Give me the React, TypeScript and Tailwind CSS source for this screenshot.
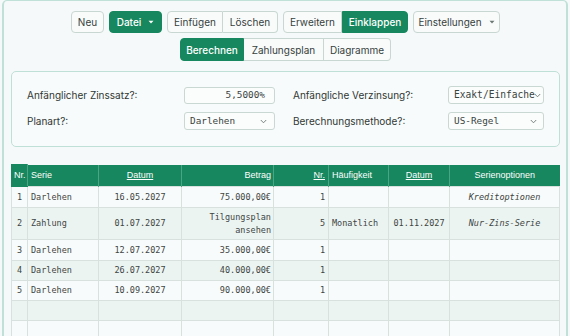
import React from "react";

const btn = "h-full flex items-center justify-center text-[10px] leading-none";
const light = "bg-[#f9fbfb] text-[#36413d] border border-[#c8d7d2]";
const green = "bg-[#16875e] text-white border border-[#16875e] font-medium";

function Caret({ color }: { color: string }) {
  return (
    <svg width="6" height="4" viewBox="0 0 6 4" className="ml-[7px]">
      <path d="M0.5 0.8 L5.5 0.8 L3 3.4 Z" fill={color} />
    </svg>
  );
}

function Chevron() {
  return (
    <svg width="7" height="5" viewBox="0 0 7 5">
      <path d="M0.8 1 L3.5 3.8 L6.2 1" fill="none" stroke="#6b7773" strokeWidth="0.9" />
    </svg>
  );
}

const mono = "font-['DejaVu_Sans_Mono',monospace]";

type Row = {
  h: string;
  bg: string;
  cells: React.ReactNode[];
};

export default function App() {
  const rows: Row[] = [
    { h: "h-[21px]", bg: "bg-[#f8fbfb]", cells: ["1", "Darlehen", "16.05.2027", "75.000,00€", "1", "", "", "Kreditoptionen"] },
    {
      h: "h-[32px]",
      bg: "bg-[#ecf4f2]",
      cells: [
        "2",
        "Zahlung",
        "01.07.2027",
        <span className="leading-[13px] block">Tilgungsplan<br />ansehen</span>,
        "5",
        "Monatlich",
        "01.11.2027",
        "Nur-Zins-Serie",
      ],
    },
    { h: "h-[21px]", bg: "bg-[#f8fbfb]", cells: ["3", "Darlehen", "12.07.2027", "35.000,00€", "1", "", "", ""] },
    { h: "h-[20px]", bg: "bg-[#ecf4f2]", cells: ["4", "Darlehen", "26.07.2027", "40.000,00€", "1", "", "", ""] },
    { h: "h-[20px]", bg: "bg-[#f8fbfb]", cells: ["5", "Darlehen", "10.09.2027", "90.000,00€", "1", "", "", ""] },
    { h: "h-[20px]", bg: "bg-[#ecf4f2]", cells: ["", "", "", "", "", "", "", ""] },
    { h: "h-[20px]", bg: "bg-[#f8fbfb]", cells: ["", "", "", "", "", "", "", ""] },
  ];
  const align = ["text-left pl-[5px]", "text-left pl-[3px]", "text-center", "text-right pr-[2px]", "text-right pr-[3px]", "text-left pl-[3px]", "text-center", "text-center italic"];

  return (
    <div className="w-[570px] h-[336px] overflow-hidden bg-[#f6f9f9] font-['Inter',sans-serif]">
      <div className="mx-[2px] h-[360px] border-x-2 border-t border-[#bfe1d7] rounded-t-[5px] pl-[7px] pr-[6px] pt-[10px]">
        {/* toolbar row 1 */}
        <div className="flex justify-center gap-[5px] h-[22px]">
          <button className={`${btn} ${light} w-[33px] rounded-[4px]`}>Neu</button>
          <button className={`${btn} ${green} w-[53px] rounded-[4px]`}>
            Datei
            <Caret color="#ffffff" />
          </button>
          <div className="flex h-full">
            <button className={`${btn} ${light} w-[56px] rounded-l-[4px]`}>Einfügen</button>
            <button className={`${btn} ${light} border-l-0 w-[55px] rounded-r-[4px]`}>Löschen</button>
          </div>
          <div className="flex h-full">
            <button className={`${btn} ${light} w-[59px] rounded-l-[4px]`}>Erweitern</button>
            <button className={`${btn} ${green} w-[66px] rounded-r-[4px]`}>Einklappen</button>
          </div>
          <button className={`${btn} ${light} w-[87px] rounded-[4px]`}>
            Einstellungen
            <Caret color="#6b7773" />
          </button>
        </div>
        {/* toolbar row 2 */}
        <div className="flex justify-center mt-[5px] h-[23px]">
          <button className={`${btn} ${green} w-[64px] rounded-l-[4px]`}>Berechnen</button>
          <button className={`${btn} ${light} border-l-0 w-[80px]`}>Zahlungsplan</button>
          <button className={`${btn} ${light} border-l-0 w-[67px] rounded-r-[4px]`}>Diagramme</button>
        </div>

        {/* form panel */}
        <div className="mt-[10px] h-[76px] border border-[#bfe0d6] rounded-[5px] bg-[#f8fbfb] pl-[15px] pr-[14px] pt-[14px]">
          <div className="grid grid-cols-[248px_251px] gap-x-[18px] gap-y-[8px] text-[10px] text-[#2f3835]">
            <div className="flex items-center justify-between h-[18px]">
              <span>Anfänglicher Zinssatz?:</span>
              <div className={`w-[91px] h-[17px] border border-[#c9d8d3] rounded-[3px] bg-[#fbfdfd] flex items-center justify-end pr-[9px] ${mono} text-[9.4px] text-[#3a4340]`}>
                5,5000%
              </div>
            </div>
            <div className="flex items-center justify-between h-[18px]">
              <span>Anfängliche Verzinsung?:</span>
              <div className={`w-[96px] h-[18px] border border-[#c9d8d3] rounded-[3px] bg-[#fbfdfd] flex items-center pl-[5px] pr-[1px] ${mono} text-[9.6px] text-[#3a4340] overflow-hidden whitespace-nowrap`}>
                <span>Exakt/Einfache</span>
                <span className="-ml-[1px]"><Chevron /></span>
              </div>
            </div>
            <div className="flex items-center justify-between h-[18px]">
              <span>Planart?:</span>
              <div className={`w-[91px] h-[18px] border border-[#c9d8d3] rounded-[3px] bg-[#fbfdfd] flex items-center justify-between pl-[5px] pr-[7px] ${mono} text-[9.4px] text-[#3a4340]`}>
                <span>Darlehen</span>
                <Chevron />
              </div>
            </div>
            <div className="flex items-center justify-between h-[18px]">
              <span>Berechnungsmethode?:</span>
              <div className={`w-[96px] h-[18px] border border-[#c9d8d3] rounded-[3px] bg-[#fbfdfd] flex items-center justify-between pl-[5px] pr-[6px] ${mono} text-[9.4px] text-[#3a4340]`}>
                <span>US-Regel</span>
                <Chevron />
              </div>
            </div>
          </div>
        </div>

        {/* table */}
        <table className="mt-[17px] ml-0 w-[548px] table-fixed border-collapse">
          <colgroup>
            <col className="w-[16px]" />
            <col className="w-[71px]" />
            <col className="w-[83px]" />
            <col className="w-[92px]" />
            <col className="w-[55px]" />
            <col className="w-[60px]" />
            <col className="w-[61px]" />
            <col className="w-[110px]" />
          </colgroup>
          <thead>
            <tr className="h-[22px] bg-[#16875e] text-white text-[9px] font-['Liberation_Sans',Arial,sans-serif]">
              <th className="font-normal text-left pl-[2px] border border-[#16875e] border-r-[#4ba584]">Nr.</th>
              <th className="font-normal text-left pl-[3px] border-r border-[#4ba584]">Serie</th>
              <th className="font-normal text-center border-r border-[#4ba584]"><span className="underline">Datum</span></th>
              <th className="font-normal text-right pr-[2px] border-r border-[#4ba584]">Betrag</th>
              <th className="font-normal text-right pr-[3px] border-r border-[#4ba584]"><span className="underline">Nr.</span></th>
              <th className="font-normal text-left pl-[3px] border-r border-[#4ba584]">Häufigkeit</th>
              <th className="font-normal text-center border-r border-[#4ba584]"><span className="underline">Datum</span></th>
              <th className="font-normal text-center">Serienoptionen</th>
            </tr>
          </thead>
          <tbody className={`${mono} text-[8.5px] text-[#3d4542]`}>
            {rows.map((r, i) => (
              <tr key={i} className={`${r.h} ${r.bg}`}>
                {r.cells.map((c, j) => (
                  <td key={j} className={`${align[j]} border border-[#d8e1de] align-middle whitespace-nowrap`}>
                    {c}
                  </td>
                ))}
              </tr>
            ))}
          </tbody>
        </table>
      </div>
    </div>
  );
}
